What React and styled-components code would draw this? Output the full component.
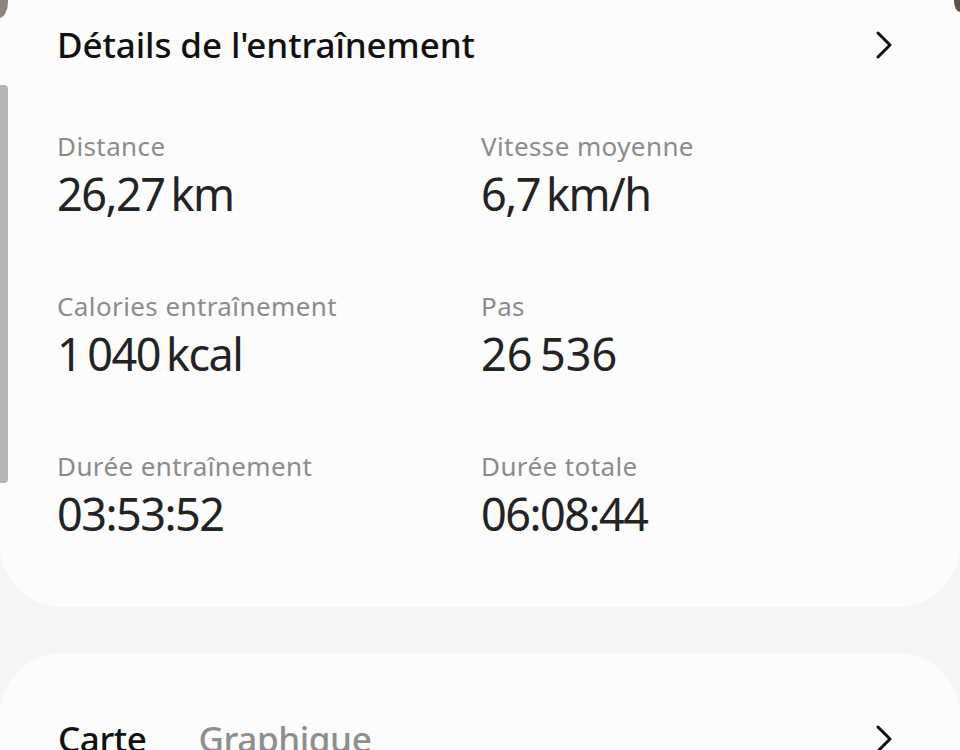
import React from 'react'
import styled, { createGlobalStyle } from 'styled-components'

const stats = [
  { label: 'Distance', value: '26,27\u202Fkm' },
  { label: 'Vitesse moyenne', value: '6,7\u202Fkm/h' },
  { label: 'Calories entraînement', value: '1\u202F040\u202Fkcal' },
  { label: 'Pas', value: '26\u202F536' },
  { label: 'Durée entraînement', value: '03:53:52' },
  { label: 'Durée totale', value: '06:08:44' },
]

const Chevron = () => (
  <S.Chevron width="18" height="30" viewBox="0 0 18 30">
    <polyline points="3,3 15,15 3,27" />
  </S.Chevron>
)

const App = () => {
  return (
    <S.Screen>
      <GlobalStyle />
      <S.Scrollbar />
      <S.CornerLeft />
      <S.CornerRight />
      <S.DetailsCard>
        <S.Header>
          <S.Title>Détails de l'entraînement</S.Title>
          <Chevron />
        </S.Header>
        <S.Grid>
          {stats.map((s) => (
            <S.Stat key={s.label}>
              <S.Label>{s.label}</S.Label>
              <S.Value>{s.value}</S.Value>
            </S.Stat>
          ))}
        </S.Grid>
      </S.DetailsCard>
      <S.MapCard>
        <S.Header>
          <S.Tabs>
            <S.Tab $active>Carte</S.Tab>
            <S.Tab>Graphique</S.Tab>
          </S.Tabs>
          <Chevron />
        </S.Header>
      </S.MapCard>
    </S.Screen>
  )
}

export default App

const GlobalStyle = createGlobalStyle`
  html, body {
    margin: 0;
    padding: 0;
    background: #f5f5f5;
    font-family: "Noto Sans", "Open Sans", sans-serif;
  }
`

const S = {
  Screen: styled.div`
    position: relative;
    width: 960px;
    height: 750px;
    overflow: hidden;
    background: #f5f5f5;
  `,
  Scrollbar: styled.div`
    position: absolute;
    left: 0;
    top: 85px;
    width: 8px;
    height: 398px;
    background: #b3b3b3;
    border-radius: 0 4px 4px 0;
    z-index: 2;
  `,
  CornerLeft: styled.div`
    position: absolute;
    left: -10px;
    top: -14px;
    width: 18px;
    height: 32px;
    border-radius: 50%;
    background: #8e8580;
    z-index: 2;
  `,
  CornerRight: styled.div`
    position: absolute;
    right: -6px;
    top: -10px;
    width: 12px;
    height: 22px;
    border-radius: 50%;
    background: #5e524d;
    z-index: 2;
  `,
  DetailsCard: styled.section`
    height: 607px;
    box-sizing: border-box;
    padding: 21px 67px 0 57px;
    background: #fcfcfc;
    border-radius: 0 0 62px 62px;
  `,
  MapCard: styled.section`
    margin-top: 46px;
    height: 300px;
    box-sizing: border-box;
    padding: 62px 67px 0 58px;
    background: #fcfcfc;
    border-radius: 62px 62px 0 0;
  `,
  Header: styled.div`
    display: flex;
    align-items: center;
    justify-content: space-between;
    height: 47px;
  `,
  Title: styled.h2`
    margin: 0;
    font-size: 35px;
    line-height: 47px;
    font-weight: 500;
    color: #111111;
    letter-spacing: -0.1px;
  `,
  Chevron: styled.svg`
    display: block;
    fill: none;
    stroke: #111111;
    stroke-width: 3;
    stroke-linecap: round;
    stroke-linejoin: round;
  `,
  Grid: styled.div`
    display: grid;
    grid-template-columns: 424px 1fr;
    row-gap: 67px;
    margin-top: 61px;
  `,
  Stat: styled.div`
    display: flex;
    flex-direction: column;
    gap: 2px;
  `,
  Label: styled.div`
    font-size: 26px;
    line-height: 35px;
    color: #8c8c8c;
    letter-spacing: 0.4px;
  `,
  Value: styled.div`
    font-size: 45px;
    line-height: 56px;
    font-weight: 440;
    color: #232323;
    letter-spacing: -1.5px;
  `,
  Tabs: styled.div`
    display: flex;
    gap: 52px;
  `,
  Tab: styled.div`
    font-size: 35px;
    line-height: 47px;
    font-weight: 500;
    letter-spacing: -0.4px;
    color: ${(p) => (p.$active ? '#111111' : '#8e8e8e')};
  `,
}
